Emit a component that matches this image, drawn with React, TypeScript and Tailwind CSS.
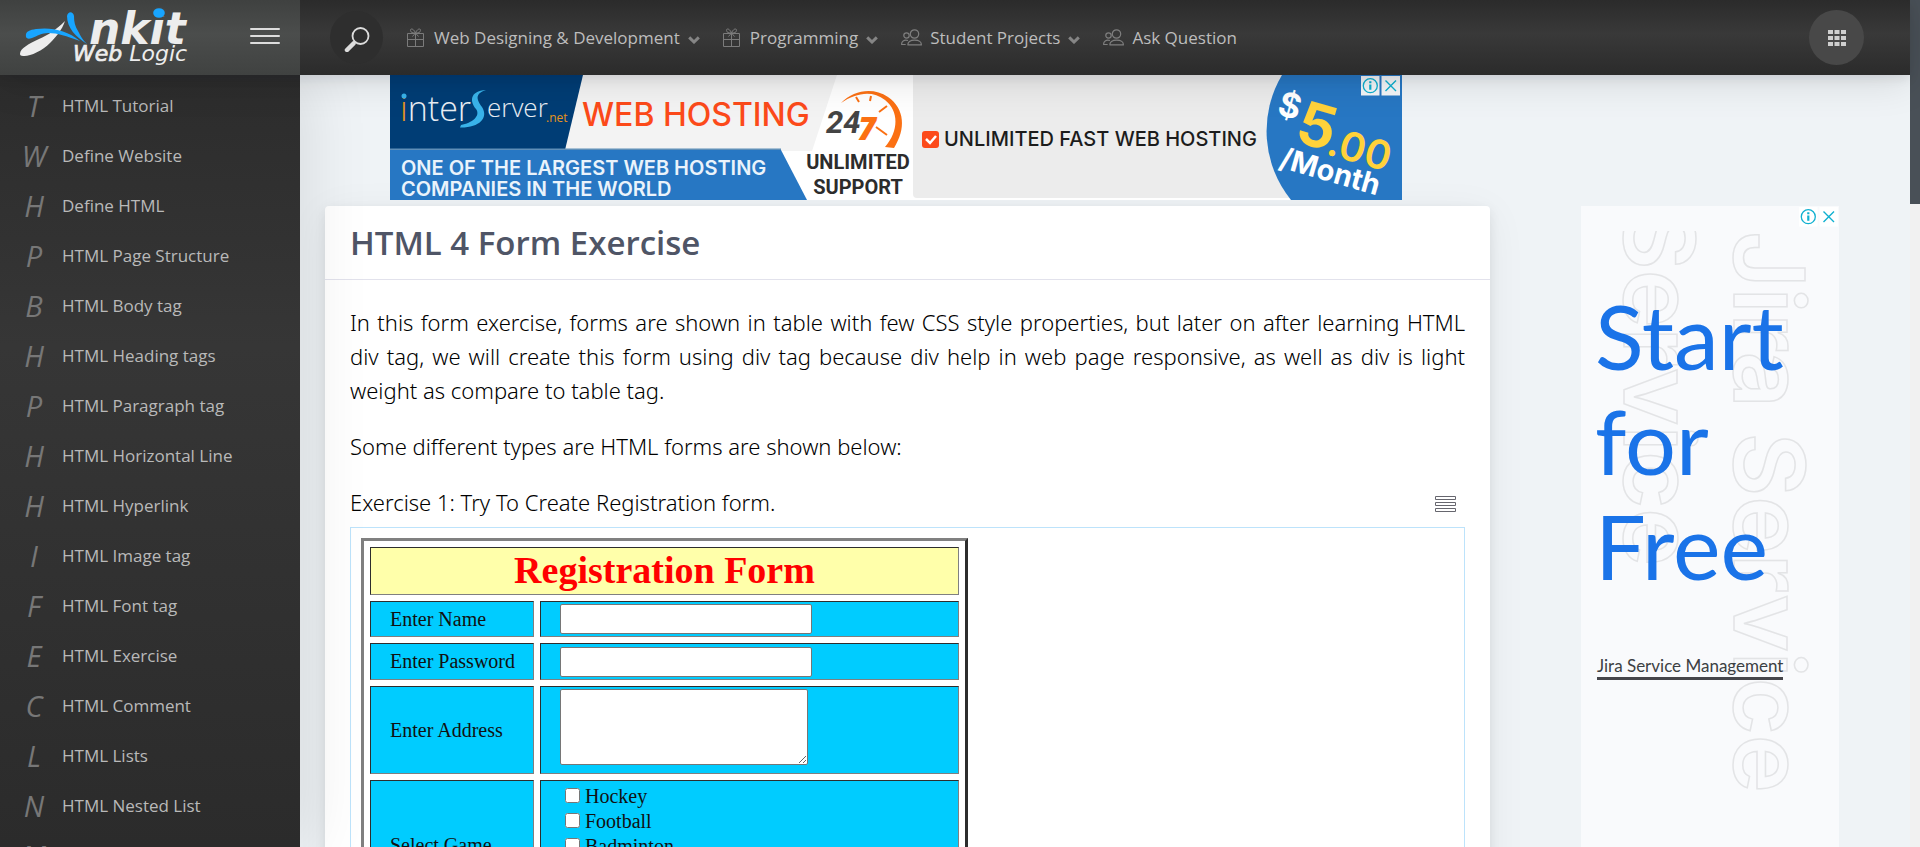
import type { ReactNode } from "react";

const lessons: [string, string][] = [
  ["T", "HTML Tutorial"],
  ["W", "Define Website"],
  ["H", "Define HTML"],
  ["P", "HTML Page Structure"],
  ["B", "HTML Body tag"],
  ["H", "HTML Heading tags"],
  ["P", "HTML Paragraph tag"],
  ["H", "HTML Horizontal Line"],
  ["H", "HTML Hyperlink"],
  ["I", "HTML Image tag"],
  ["F", "HTML Font tag"],
  ["E", "HTML Exercise"],
  ["C", "HTML Comment"],
  ["L", "HTML Lists"],
  ["N", "HTML Nested List"],
  ["M", "HTML Marquee"],
];

const games = ["Hockey", "Football", "Badminton", "Cricket", "Volleyball"];

function Logo() {
  return (
    <svg width="180" height="75" viewBox="0 0 180 75" role="img" aria-label="Ankit Web Logic">
      <path d="M5 54C5 48 14 44 24 39C33 35 41 30 50 21C47 30 41 37 35 43C27 51 14 57 8 56C6 56 5 55 5 54z" fill="#ededed" />
      <path d="M11 37c-1-6 4-7 10-8c15-2 31 1 44 12c-14-5-22-8-32-8c-6 0-11 3-16 5c-3 1-5 1-6-1z" fill="#18a5ff" />
      <path d="M52 16c1-5 6-5 7 0c0 6 1 10 4 15c3 6 5 9 9 13c-11-7-20-16-20-28z" fill="#18a5ff" />
      <text x="74" y="44" fontFamily="'DejaVu Sans', sans-serif" fontSize="44" fontWeight="700" fontStyle="italic" fill="#ededed">nkit</text>
      <ellipse cx="144" cy="12" rx="8" ry="5.500" fill="#444645" />
      <ellipse cx="144" cy="13" rx="5.800" ry="4.800" fill="#18a5ff" />
      <text x="58" y="61" fontFamily="'DejaVu Sans', sans-serif" fontSize="22" fontStyle="italic" fill="#ededed">
        <tspan stroke="#ededed" strokeWidth="0.7">Web</tspan> Logic
      </text>
    </svg>
  );
}

function GiftIcon() {
  return (
    <svg width="17" height="19" viewBox="0 0 17 19" fill="none" stroke="#7b7b7b" strokeWidth="1" className="mr-0.5" aria-hidden="true">
      <path d="M.5 5.500h16v13H.5zM.5 11.500h16M8.500 4.500v14M8.500 5C7 1 3.500-.5 3.500 2.500C3.500 4.500 6 5 8.500 5C11 5 13.500 4.500 13.500 2.500C13.500-.5 10 1 8.500 5L5.500 8.500M8.500 5l3 3.500" />
    </svg>
  );
}

function UsersIcon() {
  return (
    <svg width="21" height="17" viewBox="0 0 21 17" fill="none" stroke="#7f7f7f" strokeWidth="1.200" aria-hidden="true">
      <circle cx="13.500" cy="5" r="4.200" />
      <circle cx="5.500" cy="6.500" r="2.700" />
      <path d="M7 15.800h13.300c.3-3-2.300-4.600-6.700-4.600S6.500 13 7 15.800zM7 11.500c-4-1-6.700.8-6.300 4h4" />
    </svg>
  );
}

function Chevron() {
  return (
    <svg width="12" height="8" viewBox="0 0 12 8" fill="none" stroke="#858585" strokeWidth="3" aria-hidden="true">
      <path d="M1.200 1.400L6 6l4.800-4.600" />
    </svg>
  );
}

function NavLink({ icon, children, menu }: { icon: ReactNode; children: ReactNode; menu?: boolean }) {
  return (
    <a href="#" className="flex items-center whitespace-nowrap">
      <span className="mr-2 flex">{icon}</span>
      {children}
      {menu && (
        <span className="ml-2 flex pt-1">
          <Chevron />
        </span>
      )}
    </a>
  );
}

function AdChoices({ box }: { box: string }) {
  return (
    <svg width="39" height="20" viewBox="0 0 39 20" fill="none" stroke="#0fb0d0" aria-hidden="true">
      <path d="M0 0h18.500v19.500H0zM20.500 0H39v19.500H20.500z" fill={box} stroke="none" />
      <circle cx="9.300" cy="9.700" r="7" strokeWidth="1.300" />
      <path d="M9.300 8.500v5.200M9.300 5.200v2" strokeWidth="2.200" />
      <path d="M24.500 4.500l10.500 10.500M35 4.500L24.500 15" strokeWidth="1.400" />
    </svg>
  );
}

function HostingBanner() {
  return (
    <a href="#" className="relative block w-[1012px] shrink-0" aria-label="InterServer web hosting">
      <svg width="1012" height="125" viewBox="0 0 1012 125" fontFamily="Inter, sans-serif" className="block">
        <rect width="1012" height="125" fill="#ffffff" />
        <path d="M180 0h267l-25 76H170z" fill="#f3f3f3" />
        <path d="M0 0h193l-18 75H0z" fill="#003d75" />
        <path d="M0 73.500h391v2H0z" fill="#5f8fb8" />
        <path d="M0 75h391l26 50H0z" fill="#2777c3" />
        <rect x="523" y="-6" width="500" height="129" rx="4" fill="#ececec" />
        <path d="M892 0h120v125H901A109.500 109.500 0 0 1 892 0z" fill="#2777c3" />

        <text x="10" y="46" fontFamily="'Open Sans', sans-serif" fontWeight="300" fontSize="34" fill="#e9eef3">
          <tspan fill="#e8951c">i</tspan>nter
        </text>
        <circle cx="14" cy="21" r="2.500" fill="#39b3ea" />
        <path d="M96 15C79 16 80 27 86 34C91 41 82 48 71 50L70 52.500C89 53 99 43 92 32C87 25 84 19 96 15z" fill="#39b3ea" />
        <text x="97" y="42" fontFamily="'Open Sans', sans-serif" fontWeight="300" fontSize="26" fill="#e9eef3">erver</text>
        <text x="156" y="47" fontFamily="'Open Sans', sans-serif" fontSize="12" fill="#e8951c">.net</text>

        <text x="192" y="51" fontSize="32" fontWeight="500" fill="#fc4a1a">WEB HOSTING</text>
        <g fontSize="20" fontWeight="600" fill="#eaf3fb">
          <text x="11" y="100">ONE OF THE LARGEST WEB HOSTING</text>
          <text x="11" y="121">COMPANIES IN THE WORLD</text>
        </g>

        <path d="M451 28C464 15 483 12 498 22C515 34 516 54 504 73L495 72C509 56 509 36 495 25C482 15 466 18 451 28z" fill="#fb7013" />
        <path d="M466 22l3 5M481 21l-1 5M497 31l-8 6M486 52l11 8" stroke="#fb7013" strokeWidth="2" fill="none" />
        <text x="436" y="58" fontFamily="Roboto, sans-serif" fontSize="31" fontWeight="700" fontStyle="italic" fill="#444444">24</text>
        <text x="468" y="65" fontFamily="'Open Sans', sans-serif" fontSize="31" fontWeight="800" fontStyle="italic" fill="#fb7013">7</text>
        <g fontFamily="Roboto, sans-serif" fontSize="20" fontWeight="700" fill="#2c2c2c" textAnchor="middle">
          <text x="468" y="94">UNLIMITED</text>
          <text x="468" y="119">SUPPORT</text>
        </g>

        <rect x="532" y="56" width="17" height="17" rx="3" fill="#fc4a1a" />
        <path d="M536 64l4 4 6-7" stroke="#ffffff" strokeWidth="2.500" fill="none" />
        <text x="554" y="71" fontSize="20" fontWeight="500" fill="#1c1c1c">UNLIMITED FAST WEB HOSTING</text>

        <g fontWeight="700">
          <text transform="translate(886 39) rotate(16)" fontSize="34" fill="#ffffff">$</text>
          <text transform="translate(903 66) rotate(16)" fontSize="60" fill="#ffd23b">5</text>
          <text transform="translate(935 79) rotate(16)" fontSize="40" fontWeight="600" fill="#ffd23b">.00</text>
          <text transform="translate(888 92) rotate(16)" fontSize="29" fill="#ffffff">/Month</text>
        </g>
      </svg>
      <span className="absolute top-px right-0.5">
        <AdChoices box="#f4f6f8" />
      </span>
    </a>
  );
}

function JiraAd() {
  return (
    <a href="#" className="relative block h-[660px] w-[258px] overflow-hidden bg-[#f9fafc]">
      <svg
        className="absolute top-[25px] left-0"
        width="258"
        height="600"
        viewBox="0 25 258 600"
        fontFamily="Inter, sans-serif"
        fontWeight="600"
        fontSize="98"
        fill="none"
        stroke="#e3e4e6"
        strokeWidth="1.500"
        aria-hidden="true"
      >
        <text transform="translate(153 25) rotate(90)">Jira Service</text>
        <text transform="translate(43 0) rotate(90)">Service</text>
      </svg>
      <span className="absolute top-px right-px">
        <AdChoices box="#ffffff" />
      </span>
      <span className="relative block px-3.5 pt-[77px] font-[Lato] text-[90px] leading-[105px] text-[#1a73e8]">
        Start
        <br />
        for
        <br />
        Free
      </span>
      <span className="relative mt-[57px] ml-4 inline-block border-b-3 border-[#45454a] font-[Lato] text-[17px] leading-[22px] text-[#3c4043]">
        Jira Service Management
      </span>
    </a>
  );
}

const cell = "border border-t-[#2d2d2d] border-r-[#808080] border-b-[#808080] border-l-[#2d2d2d] bg-[#00ccff] pl-[19px] whitespace-nowrap";
const field = "block w-[252px] rounded-[2px] border border-[#767676] bg-white px-1";

function RegistrationForm() {
  return (
    <table className="w-[607px] border-separate border-spacing-[6px] border-3 border-t-[#808080] border-r-[#2d2d2d] border-b-[#2d2d2d] border-l-[#808080] font-['Liberation_Serif',serif] text-[20px] leading-[25px] text-[#111]">
      <thead>
        <tr>
          <th
            colSpan={2}
            className="h-12 border border-t-[#2d2d2d] border-r-[#808080] border-b-[#808080] border-l-[#2d2d2d] bg-[#ffffaa] pb-0.5 text-[38px] leading-[44px] font-bold text-[#ff0000]"
          >
            Registration Form
          </th>
        </tr>
      </thead>
      <tbody>
        <tr>
          <td className={cell + " h-9 w-[164px]"}>
            <label htmlFor="name">Enter Name</label>
          </td>
          <td className={cell}>
            <input id="name" type="text" className={field + " h-[30px]"} />
          </td>
        </tr>
        <tr>
          <td className={cell + " h-[37px]"}>
            <label htmlFor="password">Enter Password</label>
          </td>
          <td className={cell}>
            <input id="password" type="password" className={field + " h-[30px]"} />
          </td>
        </tr>
        <tr>
          <td className={cell}>
            <label htmlFor="address">Enter Address</label>
          </td>
          <td className={cell + " h-[88px] pt-0.5 align-top"}>
            <textarea id="address" className="block h-[76px] w-[248px] rounded-[2px] border border-[#767676] bg-white" />
          </td>
        </tr>
        <tr>
          <td className={cell}>Select Game</td>
          <td className={cell + " pt-[3px]"}>
            {games.map((game) => (
              <label key={game} className="flex h-[25px] items-center gap-[5px] pl-[5px]">
                <input type="checkbox" className="mb-0.5 h-[15px] w-[15px]" />
                {game}
              </label>
            ))}
          </td>
        </tr>
      </tbody>
    </table>
  );
}

export default function App() {
  return (
    <div className="flex h-screen overflow-hidden bg-[#eff3f6] font-['Open_Sans',sans-serif]">
      <div className="flex min-w-0 flex-1 flex-col">
        <header className="relative z-20 flex h-[75px] shrink-0 bg-linear-to-b from-[#2b2b2b] via-[#393939] via-45% to-[#2b2b2b] shadow-[0_6px_40px_rgba(4,9,20,0.12),0_4px_10px_rgba(4,9,20,0.08)]">
          <div className="flex w-[300px] shrink-0 items-center justify-between bg-linear-to-b from-[#3f4140] via-[#4b4d4c] via-45% to-[#404241] pr-5 pl-[15px]">
            <a href="#" className="flex">
              <Logo />
            </a>
            <button type="button" aria-label="Toggle menu" className="flex w-[30px] flex-col gap-[5px] pb-1">
              <span className="h-0.5 rounded bg-[#dddddd]" />
              <span className="h-0.5 rounded bg-[#dddddd]" />
              <span className="h-0.5 rounded bg-[#dddddd]" />
            </button>
          </div>
          <div className="flex flex-1 items-center pr-[46px] pl-[30px]">
            <button type="button" aria-label="Search" className="flex h-[53px] w-[53px] items-center justify-center rounded-full bg-[#2e2e2e]">
              <svg width="28" height="28" viewBox="0 0 28 28" fill="none" stroke="#dcdcdc" strokeLinecap="round" aria-hidden="true">
                <circle cx="17.500" cy="12" r="8" strokeWidth="1.800" />
                <path d="M10.500 19.500L4 26" strokeWidth="4.500" />
              </svg>
            </button>
            <nav className="ml-6 flex items-center gap-[23px] text-[17px] leading-6 text-[#bdbdbd]">
              <NavLink icon={<GiftIcon />} menu>Web Designing &amp; Development</NavLink>
              <NavLink icon={<GiftIcon />} menu>Programming</NavLink>
              <NavLink icon={<UsersIcon />} menu>Student Projects</NavLink>
              <NavLink icon={<UsersIcon />}>Ask Question</NavLink>
            </nav>
            <button type="button" aria-label="Apps" className="ml-auto flex h-[55px] w-[55px] items-center justify-center rounded-full bg-[#484848]">
              <svg width="18" height="16" viewBox="0 0 18 16" fill="#cfcfcf" aria-hidden="true">
                <path d="M0 0h5v4H0zM6.500 0h5v4h-5zM13 0h5v4h-5zM0 6h5v4H0zM6.500 6h5v4h-5zM13 6h5v4h-5zM0 12h5v4H0zM6.500 12h5v4h-5zM13 12h5v4h-5z" />
              </svg>
            </button>
          </div>
        </header>

        <div className="flex min-h-0 flex-1">
          <nav className="z-10 w-[300px] shrink-0 overflow-hidden bg-linear-to-b from-[#2c2c2c] via-[#363636] via-35% to-[#2b2b2b] pt-1.5 shadow-[7px_0_60px_rgba(0,0,0,0.1)]">
            {lessons.map(([letter, title]) => (
              <a key={title} href="#" className="flex h-[50px] items-center text-[17px] text-[#b9b9b9]">
                <span className="ml-[15px] w-[38px] text-center text-[29px] text-[#777777] italic">{letter}</span>
                <span className="ml-[9px]">{title}</span>
              </a>
            ))}
          </nav>

          <div className="flex min-w-0 flex-1 overflow-hidden">
            <main className="flex min-w-0 flex-1 flex-col">
              <div className="mb-1.5 flex justify-center pl-0.5">
                <HostingBanner />
              </div>
              <article className="ml-[25px] shrink-0 rounded-[4px] bg-white shadow-[0_7px_40px_rgba(4,9,20,0.06),0_4px_12px_rgba(4,9,20,0.08)]">
                <h1 className="border-b border-[#e2e2ec] px-[25px] py-3.5 text-[33px] leading-[45px] font-semibold text-[#4f5566]">
                  HTML 4 Form Exercise
                </h1>
                <div className="px-[25px] pt-[25px] text-[22px] leading-[34px] text-black">
                  <div className="font-['Noto_Sans',sans-serif] font-light">
                    <p className="mb-[22px] text-justify">
                      In this form exercise, forms are shown in table with few CSS style properties, but later on
                      after learning HTML div tag, we will create this form using div tag because div help in web
                      page responsive, as well as div is light weight as compare to table tag.
                    </p>
                    <p className="mb-[22px]">Some different types are HTML forms are shown below:</p>
                    <div className="mb-2 flex items-center justify-between pr-[9px]">
                      <p>Exercise 1: Try To Create Registration form.</p>
                      <svg width="21" height="20" viewBox="0 -4 21 20" fill="none" stroke="#66666e" aria-hidden="true">
                        <path d="M.5.500h20v3H.5zM.5 6.500h20v3H.5zM.5 12.500h20v3H.5z" />
                      </svg>
                    </div>
                  </div>
                  <div className="border border-[#bde3fb] p-2.5">
                    <RegistrationForm />
                  </div>
                </div>
              </article>
            </main>
            <aside className="flex w-[420px] shrink-0 justify-center pt-[131px] pl-5">
              <JiraAd />
            </aside>
          </div>
        </div>
      </div>
      <div className="w-2.5 shrink-0 bg-[#f1f1f1]">
        <div className="h-[204px] bg-[#495057]" />
      </div>
    </div>
  );
}
